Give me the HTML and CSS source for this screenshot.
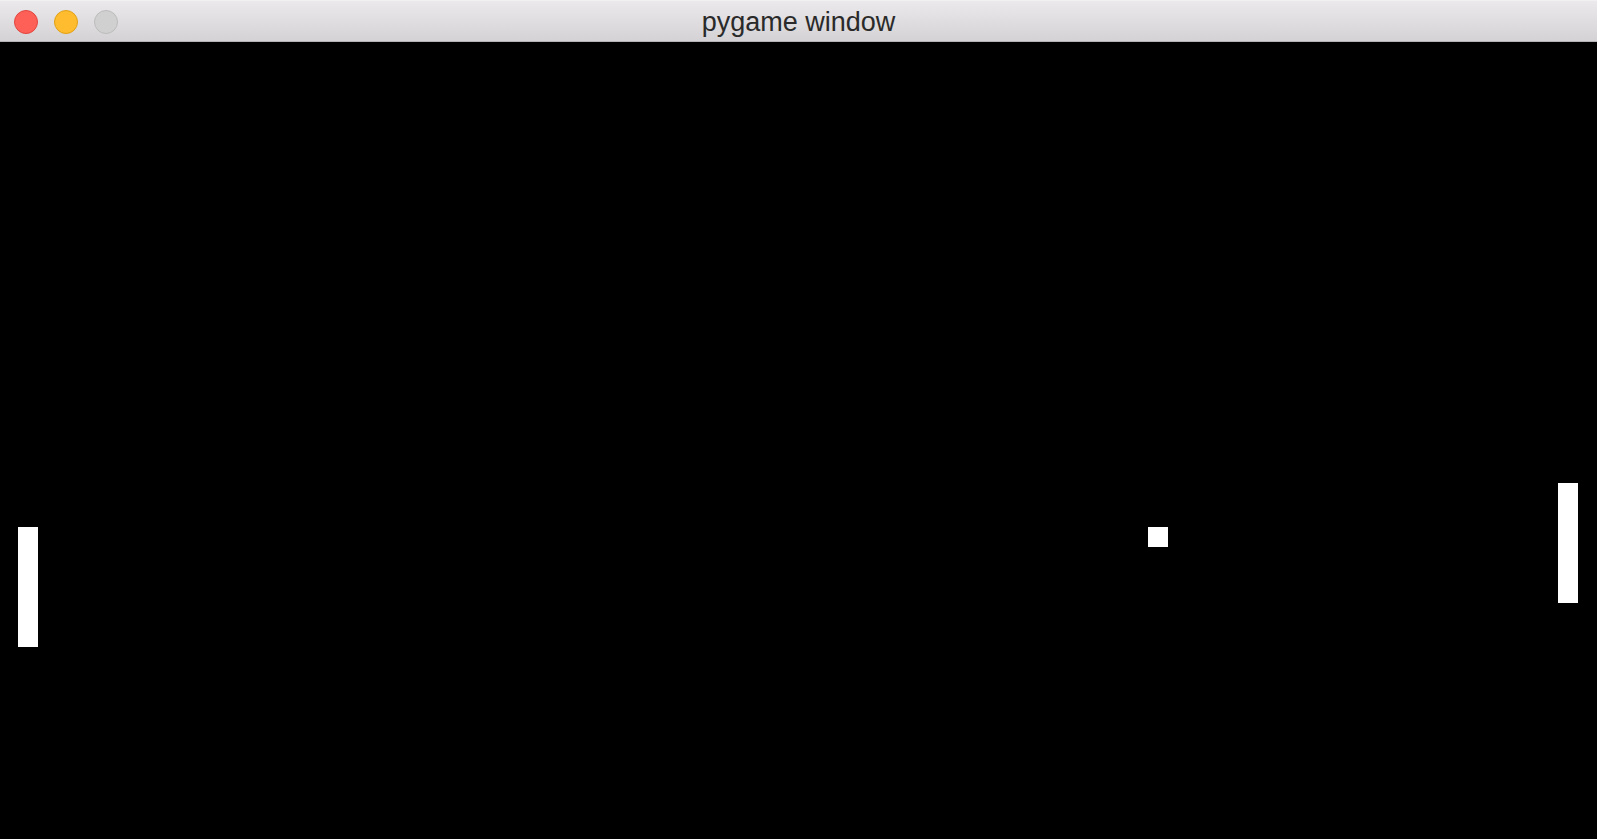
FILE: index.html
```html
<!DOCTYPE html>
<html>
<head>
<meta charset="utf-8">
<link rel="stylesheet" href="styles.css">
</head>
<body>
<div class="window">
  <div class="titlebar">
    <div class="lights">
      <span class="light red"></span>
      <span class="light yellow"></span>
      <span class="light gray"></span>
    </div>
    <div class="title">pygame window</div>
  </div>
  <div class="canvas">
    <div class="obj paddle" style="left:18px;top:485px"></div>
    <div class="obj ball" style="left:1148px;top:485px"></div>
    <div class="obj paddle" style="left:1558px;top:441px"></div>
  </div>
</div>
</body>
</html>
```

FILE: styles.css
```css
html, body {
  margin: 0;
  padding: 0;
  background: #000;
}
.window {
  width: 1597px;
  height: 839px;
  display: flex;
  flex-direction: column;
  overflow: hidden;
}
.titlebar {
  flex: 0 0 42px;
  height: 42px;
  position: relative;
  background: linear-gradient(#ebe9eb, #d4d2d4);
  border-top: 1px solid #f2f1f2;
  border-bottom: 1px solid #b5b3b5;
  box-sizing: border-box;
  display: flex;
  align-items: center;
  justify-content: center;
}
.lights {
  position: absolute;
  left: 14px;
  top: 9px;
  display: flex;
  gap: 16px;
}
.light {
  width: 24px;
  height: 24px;
  border-radius: 50%;
  box-sizing: border-box;
}
.red { background: #fe5f57; border: 1px solid #e2463f; }
.yellow { background: #febc2e; border: 1px solid #e1a116; }
.gray { background: #d1d0d1; border: 1px solid #bdbcbd; }
.title {
  font-family: "Liberation Sans", Arial, sans-serif;
  font-size: 27px;
  color: #2a2a2a;
  margin-top: 2px;
}
.canvas {
  flex: 1;
  position: relative;
  background: #000;
}
.obj {
  position: absolute;
  background: #fff;
}
.paddle { width: 20px; height: 120px; }
.ball { width: 20px; height: 20px; }
```
